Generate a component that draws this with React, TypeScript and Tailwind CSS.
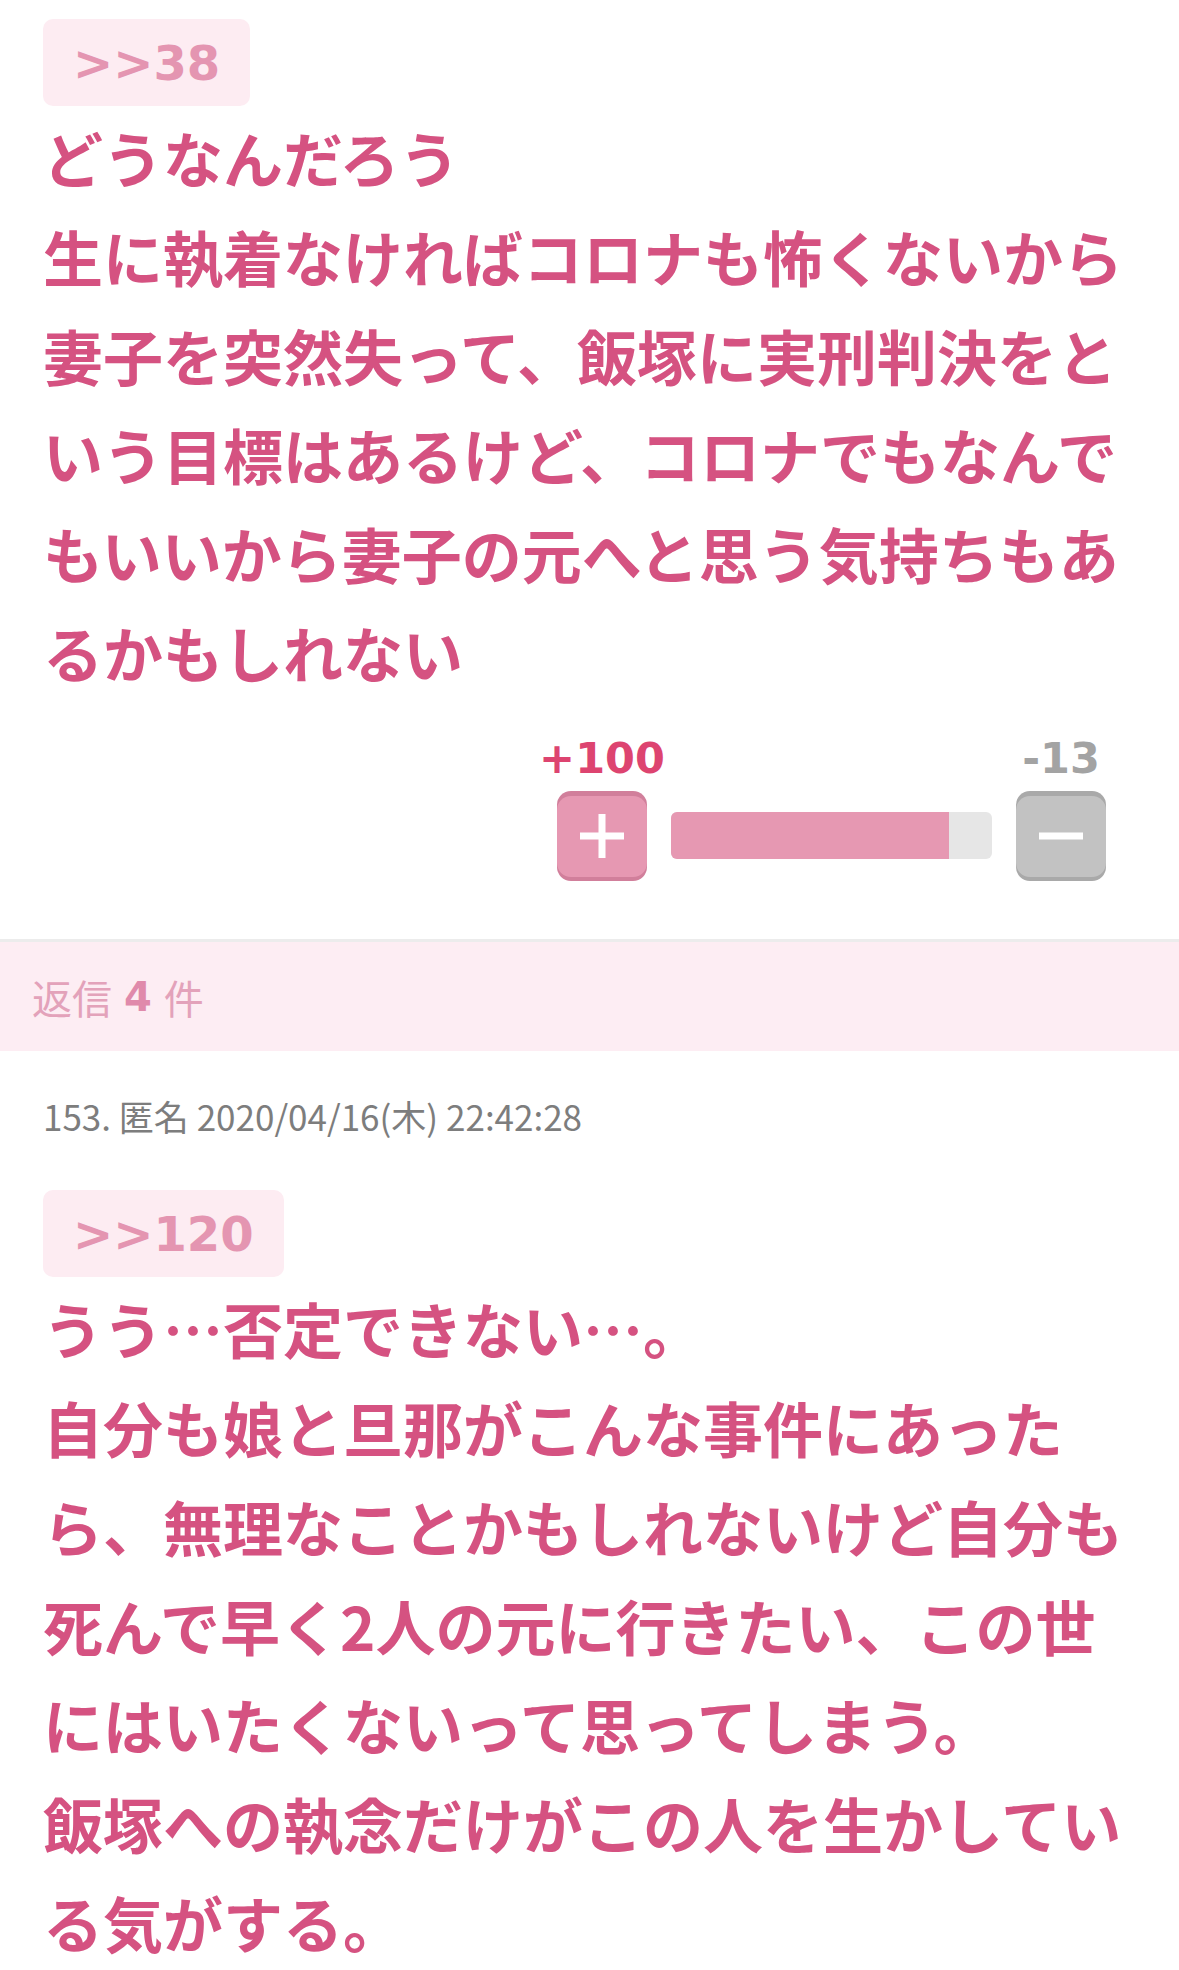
const jp = "font-['Noto_Sans_CJK_JP',sans-serif]";
const verdana = "font-['DejaVu_Sans','Noto_Sans_CJK_JP',sans-serif]";

function Anchor({ to }: { to: string }) {
  return (
    <div
      className={`inline-flex h-[87px] items-center rounded-[10px] bg-[#fdecf2] px-[30px] text-[48px] font-bold leading-none text-[#e495b1] ${verdana}`}
    >
      &gt;&gt;{to}
    </div>
  );
}

function Body({ lines }: { lines: string[] }) {
  return (
    <div className={`mt-[1px] text-[60px] font-bold leading-[99px] text-[#d55281] ${jp}`}>
      {lines.map((l, i) => (
        <p key={i}>{l}</p>
      ))}
    </div>
  );
}

function Votes({ plus, minus }: { plus: number; minus: number }) {
  return (
    <div className="mt-[36px] flex justify-end pr-[30px]">
      <div className="flex flex-col">
        <div className={`flex h-[42px] items-center text-[43px] font-bold leading-[42px] ${verdana}`}>
          <div className="flex w-[90px] justify-center whitespace-nowrap text-[#dd4470]">+{plus}</div>
          <span className="flex-1" />
          <div className="flex w-[90px] justify-center whitespace-nowrap text-[#a3a3a3]">-{minus}</div>
        </div>
        <div className="mt-[12px] flex items-center gap-[24px]">
          <button className="h-[90px] w-[90px] rounded-[14px] bg-[#d17f9b]">
            <div className="flex h-[81px] items-center justify-center rounded-[14px] bg-[#e698b2]">
              <svg width="44" height="44" viewBox="0 0 44 44">
                <rect x="0" y="18.5" width="44" height="7" fill="#fff" />
                <rect x="18.5" y="0" width="7" height="44" fill="#fff" />
              </svg>
            </div>
          </button>
          <div className="-mt-[2px] h-[47px] w-[321px] overflow-hidden rounded-[6px] bg-[#e6e6e6]">
            <div className="h-full w-[278px] bg-[#e698b2]" />
          </div>
          <button className="h-[90px] w-[90px] rounded-[14px] bg-[#a9a9a9]">
            <div className="flex h-[81px] items-center justify-center rounded-[14px] bg-[#c2c2c2]">
              <svg width="44" height="8" viewBox="0 0 44 8">
                <rect x="0" y="0.5" width="44" height="7" fill="#fff" />
              </svg>
            </div>
          </button>
        </div>
      </div>
    </div>
  );
}

export default function App() {
  return (
    <div className="min-h-[1970px] w-[1179px] overflow-hidden bg-white">
      <div className="px-[43px] pt-[19px]">
        <Anchor to="38" />
        <Body
          lines={[
            "どうなんだろう",
            "生に執着なければコロナも怖くないから妻子を突然失って、飯塚に実刑判決をという目標はあるけど、コロナでもなんでもいいから妻子の元へと思う気持ちもあるかもしれない",
          ]}
        />
        <Votes plus={100} minus={13} />
      </div>

      <div className="mt-[58px] border-t-[3px] border-[#ececec]">
        <div className={`flex h-[109px] items-center bg-[#fdedf3] pl-[32px] text-[40px] text-[#e3a2ba] ${jp}`}>
          返信 <span className={`mx-[12px] font-bold text-[#e08aab] ${verdana}`}>4</span> 件
        </div>
      </div>

      <div className="px-[43px]">
        <div className={`mt-[45px] text-[35px] leading-[40px] text-[#7d7d7d] ${jp}`}>
          153. 匿名 2020/04/16(木) 22:42:28
        </div>
        <div className="mt-[54px]">
          <Anchor to="120" />
        </div>
        <Body
          lines={[
            "うう…否定できない…。",
            "自分も娘と旦那がこんな事件にあったら、無理なことかもしれないけど自分も死んで早く2人の元に行きたい、この世にはいたくないって思ってしまう。",
            "飯塚への執念だけがこの人を生かしている気がする。",
          ]}
        />
      </div>
    </div>
  );
}
